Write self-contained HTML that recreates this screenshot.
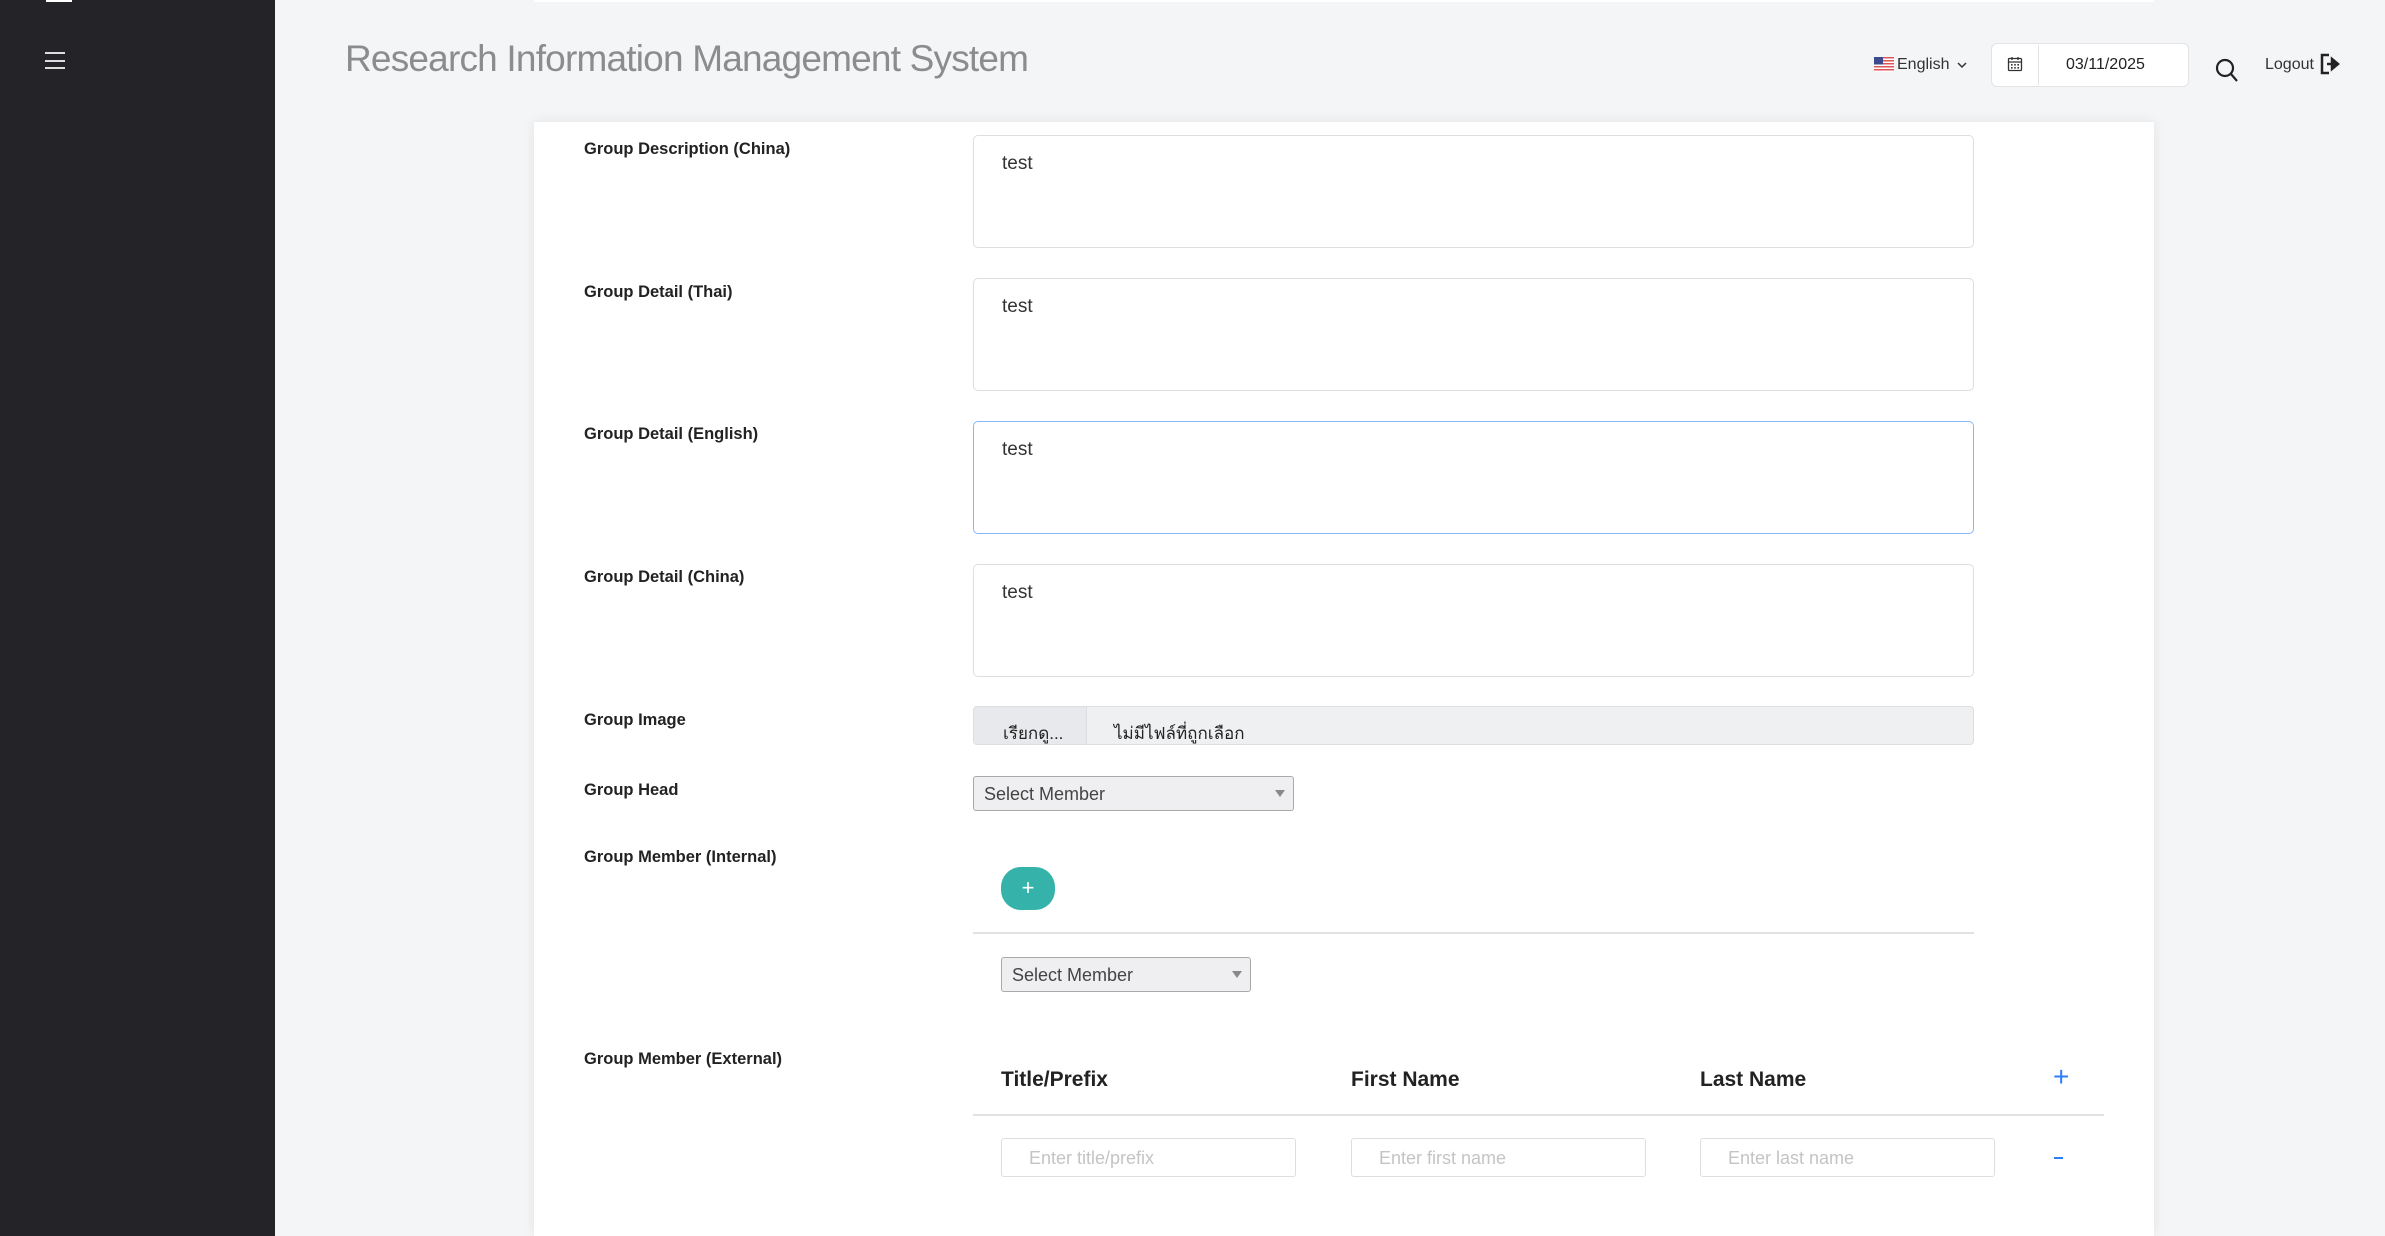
<!DOCTYPE html>
<html><head><meta charset="utf-8"><style>
*{box-sizing:border-box;margin:0;padding:0}
html,body{width:2385px;height:1236px;overflow:hidden}
body{background:#f4f5f7;font-family:"Liberation Sans","Noto Sans CJK SC",sans-serif;position:relative;color:#222}
.abs{position:absolute}
.side{left:0;top:0;width:275px;height:1236px;background:#242328}
.card{left:534px;top:122px;width:1620px;height:1114px;background:#fff;box-shadow:0 0 12px rgba(0,0,0,.08)}
.lbl{position:absolute;left:584px;font-size:16.5px;font-weight:bold;color:#222}
.ta{position:absolute;left:973px;width:1001px;height:113px;border:1.5px solid #dcdee2;border-radius:5px;background:#fff;font-size:19px;color:#333;padding:17px 0 0 28px}
.sel{position:absolute;background:#efeff1;border:1.5px solid #a9a9a9;border-radius:3px;font-size:18px;color:#444;padding:7px 0 0 10px}
.sel:after{content:"";position:absolute;right:8px;top:13px;border-left:5px solid transparent;border-right:5px solid transparent;border-top:7px solid #888}
.th{position:absolute;top:1068px;font-size:21px;font-weight:bold;color:#222}
.in{position:absolute;top:1138px;height:39px;width:295px;border:1.5px solid #dcdee2;border-radius:3px;font-size:18px;color:#c4c4c4;padding:9px 0 0 27px}
</style></head><body>
<div class="abs side"></div>
<div class="abs" style="left:46px;top:0;width:26px;height:2px;background:#fff"></div>
<div class="abs" style="left:45px;top:52px;width:20px;height:2px;background:#ddd"></div>
<div class="abs" style="left:45px;top:60px;width:20px;height:2px;background:#ddd"></div>
<div class="abs" style="left:45px;top:67px;width:20px;height:2px;background:#ddd"></div>
<div class="abs" style="left:534px;top:0;width:1620px;height:2px;background:#fff"></div>
<div class="abs" style="left:345px;top:38px;font-size:37px;color:#8c8c8c;letter-spacing:-0.8px">Research Information Management System</div>

<svg class="abs" style="left:1874px;top:57px" width="20" height="15" viewBox="0 0 20 15"><rect width="20" height="15" fill="#fff"/><g fill="#d55"><rect y="0" width="20" height="1.5"/><rect y="3" width="20" height="1.5"/><rect y="6" width="20" height="1.5"/><rect y="9" width="20" height="1.5"/><rect y="12" width="20" height="1.5"/></g><rect width="9" height="7.5" fill="#3c4a8c"/></svg>
<div class="abs" style="left:1897px;top:56px;font-size:16px;color:#333">English</div>
<svg class="abs" style="left:1956px;top:61px" width="12" height="8" viewBox="0 0 12 8"><path d="M2 2l4 4 4-4" stroke="#333" stroke-width="1.5" fill="none"/></svg>
<div class="abs" style="left:1991px;top:43px;width:198px;height:44px;background:#fff;border:1px solid #e3e3e6;border-radius:6px"></div>
<div class="abs" style="left:2038px;top:45px;width:1px;height:40px;background:#e3e3e6"></div>
<svg class="abs" style="left:2007px;top:56px" width="16" height="16" viewBox="0 0 16 16"><rect x="1.5" y="2.5" width="13" height="12" rx="1" stroke="#333" stroke-width="1.3" fill="none"/><path d="M5 1v3M11 1v3M1.5 6h13" stroke="#333" stroke-width="1.3"/><g fill="#333"><rect x="4" y="8" width="1.6" height="1.6"/><rect x="7.2" y="8" width="1.6" height="1.6"/><rect x="10.4" y="8" width="1.6" height="1.6"/><rect x="4" y="11" width="1.6" height="1.6"/><rect x="7.2" y="11" width="1.6" height="1.6"/><rect x="10.4" y="11" width="1.6" height="1.6"/></g></svg>
<div class="abs" style="left:2066px;top:56px;font-size:16px;color:#222">03/11/2025</div>
<svg class="abs" style="left:2215px;top:58px" width="24" height="25" viewBox="0 0 24 25"><circle cx="10" cy="10" r="8" stroke="#222" stroke-width="2.2" fill="none"/><path d="M16 16l6 7" stroke="#222" stroke-width="2.2"/></svg>
<div class="abs" style="left:2265px;top:56px;font-size:16px;color:#333">Logout</div>
<svg class="abs" style="left:2320px;top:53px" width="20" height="22" viewBox="0 0 20 22"><path d="M9 2H2v18h7" stroke="#222" stroke-width="2.5" fill="none"/><path d="M7 11h7M12 6l6 5-6 5z" stroke="#222" stroke-width="2.5" fill="#222"/></svg>

<div class="abs card"></div>
<div class="lbl" style="top:140px">Group Description (China)</div>
<div class="ta" style="top:135px">test</div>
<div class="lbl" style="top:283px">Group Detail (Thai)</div>
<div class="ta" style="top:278px">test</div>
<div class="lbl" style="top:425px">Group Detail (English)</div>
<div class="ta" style="top:421px;border-color:#86b7fe">test</div>
<div class="lbl" style="top:568px">Group Detail (China)</div>
<div class="ta" style="top:564px">test</div>
<div class="lbl" style="top:711px">Group Image</div>
<div class="abs" style="left:973px;top:706px;width:1001px;height:39px;background:#eff0f2;border:1px solid #dcdee2;border-radius:4px;overflow:hidden">
<div class="abs" style="left:0;top:0;width:113px;height:39px;background:#e8e9ec;border-right:1px solid #dcdee2"></div>
<div class="abs" style="left:29px;top:13px;font-size:17px;color:#222">เรียกดู...</div>
<div class="abs" style="left:140px;top:13px;font-size:17px;color:#222">ไม่มีไฟล์ที่ถูกเลือก</div>
</div>
<div class="lbl" style="top:781px">Group Head</div>
<div class="sel" style="left:973px;top:776px;width:321px;height:35px">Select Member</div>
<div class="lbl" style="top:848px">Group Member (Internal)</div>
<div class="abs" style="left:1001px;top:867px;width:54px;height:43px;background:#35b3aa;border-radius:20px;color:#fff;font-size:22px;text-align:center;line-height:42px">+</div>
<div class="abs" style="left:973px;top:932px;width:1001px;height:2px;background:#e2e2e4"></div>
<div class="sel" style="left:1001px;top:957px;width:250px;height:35px">Select Member</div>
<div class="lbl" style="top:1050px">Group Member (External)</div>
<div class="th" style="left:1001px">Title/Prefix</div>
<div class="th" style="left:1351px">First Name</div>
<div class="th" style="left:1700px">Last Name</div>
<div class="abs" style="left:2053px;top:1061px;font-size:28px;color:#2d7ff9">+</div>
<div class="abs" style="left:973px;top:1114px;width:1131px;height:2px;background:#e2e2e4"></div>
<div class="in" style="left:1001px">Enter title/prefix</div>
<div class="in" style="left:1351px">Enter first name</div>
<div class="in" style="left:1700px">Enter last name</div>
<div class="abs" style="left:2054px;top:1157px;width:9px;height:2px;background:#2d7ff9"></div>
</body></html>
